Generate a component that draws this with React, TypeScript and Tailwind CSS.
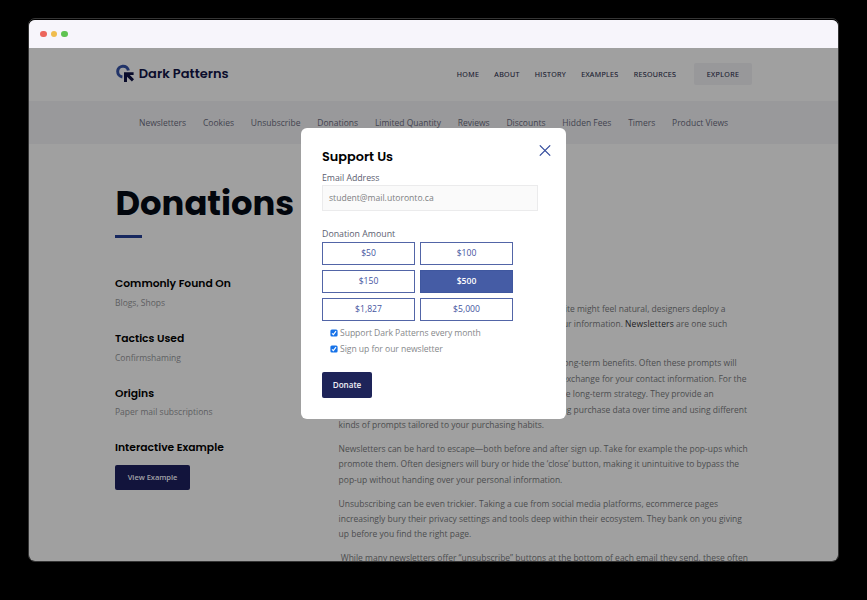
import type { ReactNode } from "react";

const topLinks = ["HOME", "ABOUT", "HISTORY", "EXAMPLES", "RESOURCES"];
const patterns = [
  "Newsletters", "Cookies", "Unsubscribe", "Donations", "Limited Quantity",
  "Reviews", "Discounts", "Hidden Fees", "Timers", "Product Views",
];
const facts = [
  { title: "Commonly Found On", text: "Blogs, Shops" },
  { title: "Tactics Used", text: "Confirmshaming" },
  { title: "Origins", text: "Paper mail subscriptions" },
];
const amounts = ["$50", "$100", "$150", "$500", "$1,827", "$5,000"];

function Logo() {
  return (
    <svg className="h-[20px] w-[20px] shrink-0" viewBox="0 0 20 20" fill="none">
      <path d="M7.4 12.9A5.4 5.4 0 1 1 13.4 6.6" stroke="#223469" strokeWidth="3" />
      <path d="M9 8.2H18.6V11H14.8L19 15.3L16.9 17.4L12 12.8V18H9Z" fill="#0a0c2b" />
    </svg>
  );
}

function Line({ children, className = "" }: { children: ReactNode; className?: string }) {
  return <div className={`flex h-[15.4px] items-center overflow-visible whitespace-pre ${className}`}><span>{children}</span></div>;
}

function Article() {
  return (
    <div className="ml-[0.6px] w-[420px] pt-[156.6px] text-[8.5px] leading-[15.4px] tracking-[-0.006px] text-[#4c4d4f]">
      <div className="mb-[8.6px]">
        <Line className="w-[387px] justify-end">To make giving up your email address on a website might feel natural, designers deploy a</Line>
        <Line className="w-[388.5px] justify-end">
          range of prompts that ask you for your information. <span className="tracking-[0.16px] text-[#1c1c22]">Newsletters</span> are one such
        </Line>
        <Line>example.</Line>
      </div>
      <div className="mb-[8.6px]">
        <Line className="w-[398px] justify-end">Newsletters trade a small reward for long-term benefits. Often these prompts will</Line>
        <Line className="w-[408px] justify-end">offer a discount or free shipping in exchange for your contact information. For the</Line>
        <Line className="w-[375px] justify-end">business, your address is part of the long-term strategy. They provide an</Line>
        <Line className="w-[408.5px] justify-end">ongoing channel for collecting purchase data over time and using different</Line>
        <Line>kinds of prompts tailored to your purchasing habits.</Line>
      </div>
      <div className="mb-[8.6px]">
        <Line>Newsletters can be hard to escape—both before and after sign up. Take for example the pop-ups which</Line>
        <Line>promote them. Often designers will bury or hide the ‘close’ button, making it unintuitive to bypass the</Line>
        <Line>pop-up without handing over your personal information.</Line>
      </div>
      <div className="mb-[8.6px]">
        <Line>Unsubscribing can be even trickier. Taking a cue from social media platforms, ecommerce pages</Line>
        <Line>increasingly bury their privacy settings and tools deep within their ecosystem. They bank on you giving</Line>
        <Line>up before you find the right page.</Line>
      </div>
      <Line> While many newsletters offer “unsubscribe” buttons at the bottom of each email they send, these often</Line>
    </div>
  );
}

function Sidebar() {
  return (
    <aside className="w-[223px] shrink-0">
      <h1 className="mt-[38px] flex h-[44px] items-center whitespace-nowrap pl-[0.5px] font-[Poppins,sans-serif] text-[33.8px] font-bold text-[#02060d]">Donations</h1>
      <div className="mt-[9px] h-[2.5px] w-[26.5px] bg-[#17285f]" />
      <div className="mt-[38.9px]">
        {facts.map((f) => (
          <div key={f.title} className="h-[54.7px]">
            <h2 className="flex h-[16px] items-center whitespace-nowrap font-[Poppins,sans-serif] text-[10.75px] font-semibold text-black">{f.title}</h2>
            <p className="mt-[3.1px] flex h-[16px] items-center text-[8.5px] text-[#5d5e60]">{f.text}</p>
          </div>
        ))}
        <h2 className="flex h-[16px] items-center whitespace-nowrap font-[Poppins,sans-serif] text-[10.75px] font-semibold text-black">Interactive Example</h2>
        <button className="mt-[8.7px] h-[24.5px] w-[75px] whitespace-nowrap rounded-[2px] bg-[#12143c] text-[7.5px] font-semibold leading-none tracking-[-0.04px] text-[#a3a3a8]">View Example</button>
      </div>
    </aside>
  );
}

function Check({ label }: { label: string }) {
  return (
    <label className="flex h-[15.6px] items-center gap-[2px] whitespace-nowrap text-[8.6px] tracking-[-0.05px] text-[#86888b]">
      <svg className="h-[8px] w-[8px]" viewBox="0 0 8 8">
        <rect x="0.4" y="0.4" width="7.2" height="7.2" rx="1.5" fill="#1672e8" />
        <path d="M2 4.3L3.4 5.7L6 2.2" fill="none" stroke="white" strokeWidth="1.1" />
      </svg>
      {label}
    </label>
  );
}

function Dialog() {
  return (
    <div role="dialog" className="absolute left-[301px] top-[128.4px] h-[291px] w-[265px] rounded-[6px] bg-white pl-[21px] pt-[20.6px] text-[#5c6070]">
      <svg className="absolute left-[238px] top-[16.5px] h-[11px] w-[12px]" viewBox="0 0 12 11" stroke="#2f489b" strokeWidth="1.2">
        <path d="M0.8 0.4L11.2 10.6M11.2 0.4L0.8 10.6" />
      </svg>
      <h3 className="flex h-[17px] items-center font-[Poppins,sans-serif] text-[12.85px] font-semibold leading-none text-black">Support Us</h3>
      <div className="mt-[5.5px] flex h-[14px] items-center text-[8.8px] tracking-[-0.04px]">Email Address</div>
      <div className="-mt-[0.5px] flex h-[26px] w-[216px] items-center border border-[#ebebec] bg-[#fafafa] pl-[6px] text-[8.6px] text-[#7d7f82]">student@mail.utoronto.ca</div>
      <div className="mt-[17px] flex h-[14px] items-center text-[8.8px]">Donation Amount</div>
      <div className="grid w-[191px] grid-cols-2 gap-x-[5px] gap-y-[5px]">
        {amounts.map((a) => (
          <button
            key={a}
            className={
              a === "$500"
                ? "h-[23px] border border-[#3f579f] bg-[#455ca5] text-[8.6px] font-semibold leading-none text-white"
                : "h-[23px] border border-[#5265a7] bg-white text-[8.6px] leading-none text-[#4555a0]"
            }
          >
            {a}
          </button>
        ))}
      </div>
      <div className="ml-[8px] mt-[4.7px]">
        <Check label="Support Dark Patterns every month" />
        <Check label="Sign up for our newsletter" />
      </div>
      <button className="mt-[15.3px] h-[26px] w-[50px] rounded-[2px] bg-[#1e2459] text-[8.1px] font-semibold leading-none text-[#f0f0f5]">Donate</button>
    </div>
  );
}

export default function App() {
  return (
    <div className="relative h-[600px] w-[867px] overflow-hidden bg-black pl-[28px] pt-[18px] font-['Open_Sans',sans-serif]">
      <div className="h-[544px] w-[811px] rounded-[7px] border border-[#353535] bg-black pt-px">
        <div className="flex h-[541px] w-[809px] flex-col overflow-hidden rounded-[6px] bg-[#a0a0a0]">
          <div className="flex h-[28px] shrink-0 items-center gap-[4px] bg-[#f7f5fb] pl-[11px]">
            <span className="h-[6.6px] w-[6.6px] rounded-full bg-[#ec655c]" />
            <span className="h-[6.6px] w-[6.6px] rounded-full bg-[#f0bd4e]" />
            <span className="h-[6.6px] w-[6.6px] rounded-full bg-[#5fc351]" />
          </div>
          <header className="flex h-[52.5px] shrink-0 items-center pl-[85.5px] pr-[86px]">
            <Logo />
            <span className="mb-[2px] ml-[4.3px] whitespace-nowrap font-[Poppins,sans-serif] text-[13px] font-semibold leading-none text-[#0b0d2c]">Dark Patterns</span>
            <nav className="ml-auto flex gap-[15.1px] text-[7.1px] tracking-[0.34px] text-[#14162c] [-webkit-text-stroke:0.1px_#14162c]">
              {topLinks.map((l) => <span key={l}>{l}</span>)}
            </nav>
            <button className="ml-[17.7px] h-[22px] w-[58px] rounded-[2px] bg-[#98989a] text-[7.1px] leading-none tracking-[0.38px] text-[#14162c] [-webkit-text-stroke:0.1px_#14162c]">EXPLORE</button>
          </header>
          <nav className="flex h-[43.5px] shrink-0 items-center gap-[16.85px] whitespace-nowrap bg-[#99999b] pl-[110px] pt-[1.8px] text-[8.5px] text-[#42434f]">
            {patterns.map((p) => <span key={p}>{p}</span>)}
          </nav>
          <main className="flex min-h-0 flex-1 overflow-hidden pl-[86px]">
            <Sidebar />
            <Article />
          </main>
        </div>
      </div>
      <Dialog />
    </div>
  );
}
